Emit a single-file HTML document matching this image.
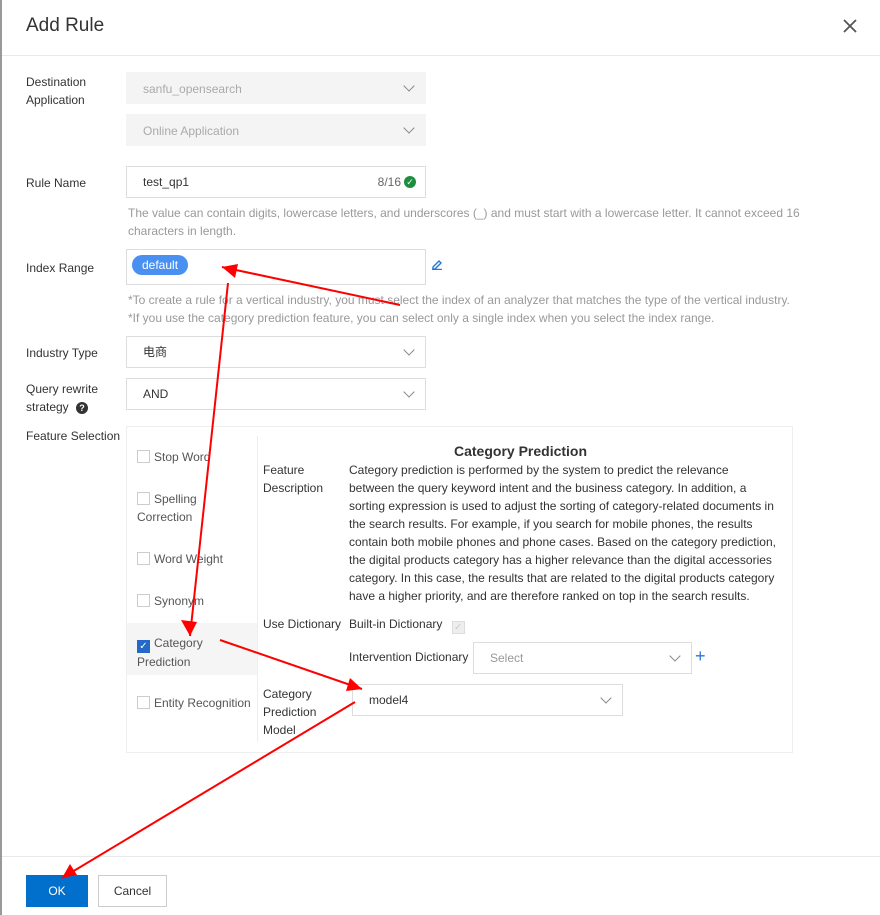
<!DOCTYPE html><html><head><style>
body{margin:0;width:880px;height:915px;background:#fff;font-family:"Liberation Sans",sans-serif;font-size:12px;color:#333;position:relative;overflow:hidden}
.a{position:absolute}
.lbl{position:absolute;left:26px;line-height:18px;color:#333}
.sel{position:absolute;left:126px;width:300px;height:30px;border:1px solid #ddd;box-sizing:border-box;line-height:28px;padding-left:16px}
.dis{background:#f4f4f4;border-color:#f4f4f4;color:#aaa}
.chev{position:absolute;right:12px;width:7px;height:7px;border-right:1.5px solid #888;border-bottom:1.5px solid #888;transform:rotate(45deg);top:9px}
.help{color:#999;line-height:18px}
.cb{display:inline-block;width:11px;height:11px;border:1px solid #ccc;vertical-align:-2px;margin-right:4px}
.fi{position:absolute;left:137px;line-height:18px;color:#555}
</style></head><body>
<div class="a" style="left:0;top:0;width:2px;height:915px;background:#999"></div>
<div class="a" style="left:26px;top:15px;font-size:19px;color:#333">Add Rule</div>
<svg class="a" style="left:843px;top:19px" width="14" height="14"><path d="M1 1L13 13M13 1L1 13" stroke="#555" stroke-width="1.8"/></svg>
<div class="a" style="left:2px;top:55px;width:878px;height:1px;background:#e8e8e8"></div>

<div class="lbl" style="top:73px">Destination<br>Application</div>
<div class="sel dis" style="top:72px;height:32px;line-height:32px">sanfu_opensearch<span class="chev"></span></div>
<div class="sel dis" style="top:114px;height:32px;line-height:32px">Online Application<span class="chev"></span></div>

<div class="lbl" style="top:174px">Rule Name</div>
<div class="sel" style="top:166px;height:32px;line-height:30px;color:#333">test_qp1<span class="a" style="right:24px;color:#666">8/16</span><span class="a" style="right:9px;top:9px;width:12px;height:12px;border-radius:50%;background:#1e8e3e;color:#fff;font-size:9px;line-height:12px;text-align:center">✓</span></div>
<div class="a help" style="left:128px;top:204px;width:680px">The value can contain digits, lowercase letters, and underscores (_) and must start with a lowercase letter. It cannot exceed 16 characters in length.</div>

<div class="lbl" style="top:259px">Index Range</div>
<div class="sel" style="top:249px;height:36px;padding-left:4px"><span class="a" style="left:5px;top:5px;height:20px;line-height:20px;padding:0 10px;background:#4a90f0;color:#fff;border-radius:10px">default</span></div>
<svg class="a" style="left:431px;top:258px" width="12" height="12"><path d="M2 9L8 3L10 5L4 11H2Z" fill="none" stroke="#2778d9" stroke-width="1.4"/><path d="M1 11.5H11" stroke="#2778d9" stroke-width="1.4"/></svg>
<div class="a help" style="left:128px;top:291px">*To create a rule for a vertical industry, you must select the index of an analyzer that matches the type of the vertical industry.<br>*If you use the category prediction feature, you can select only a single index when you select the index range.</div>

<div class="lbl" style="top:344px">Industry Type</div>
<div class="sel" style="top:336px;height:32px;line-height:30px">电商<span class="chev"></span></div>
<div class="lbl" style="top:380px">Query rewrite<br>strategy <span style="display:inline-block;width:12px;height:12px;border-radius:50%;background:#333;color:#fff;font-size:9px;line-height:12px;text-align:center;margin-left:4px;font-weight:bold">?</span></div>
<div class="sel" style="top:378px;height:32px;line-height:30px">AND<span class="chev"></span></div>

<div class="lbl" style="top:427px">Feature Selection</div>
<div class="a" style="left:126px;top:426px;width:667px;height:327px;border:1px solid #eee;box-sizing:border-box"></div>
<div class="a" style="left:257px;top:436px;width:1px;height:306px;background:#eee"></div>
<div class="a" style="left:127px;top:623px;width:130px;height:52px;background:#f5f5f5"></div>
<div class="fi" style="top:448px"><span class="cb"></span>Stop Word</div>
<div class="fi" style="top:490px"><span class="cb"></span>Spelling<br>Correction</div>
<div class="fi" style="top:550px"><span class="cb"></span>Word Weight</div>
<div class="fi" style="top:592px"><span class="cb"></span>Synonym</div>
<div class="fi" style="top:634px"><span class="cb" style="background:#2468c8;border-color:#2468c8;color:#fff;font-size:10px;line-height:11px;text-align:center">✓</span>Category<br>Prediction</div>
<div class="fi" style="top:694px"><span class="cb"></span>Entity Recognition</div>

<div class="a" style="left:454px;top:443px;font-size:14px;font-weight:bold;color:#333">Category Prediction</div>
<div class="a" style="left:263px;top:461px;line-height:18px">Feature<br>Description</div>
<div class="a" style="left:349px;top:461px;line-height:18px;white-space:nowrap">Category prediction is performed by the system to predict the relevance<br>between the query keyword intent and the business category. In addition, a<br>sorting expression is used to adjust the sorting of category-related documents in<br>the search results. For example, if you search for mobile phones, the results<br>contain both mobile phones and phone cases. Based on the category prediction,<br>the digital products category has a higher relevance than the digital accessories<br>category. In this case, the results that are related to the digital products category<br>have a higher priority, and are therefore ranked on top in the search results.</div>
<div class="a" style="left:263px;top:615px;line-height:18px">Use Dictionary</div>
<div class="a" style="left:349px;top:615px;line-height:18px">Built-in Dictionary <span class="cb" style="background:#eee;border-color:#ddd;margin-left:6px;color:#ccc;font-size:10px;line-height:11px;text-align:center">✓</span></div>
<div class="a" style="left:349px;top:648px;line-height:18px">Intervention Dictionary</div>
<div class="a" style="left:473px;top:642px;width:219px;height:32px;border:1px solid #ddd;box-sizing:border-box;line-height:30px;padding-left:16px;color:#999">Select<span class="chev"></span></div>
<div class="a" style="left:695px;top:646px;color:#2778d9;font-size:18px">+</div>
<div class="a" style="left:263px;top:685px;line-height:18px">Category<br>Prediction<br>Model</div>
<div class="a" style="left:352px;top:684px;width:271px;height:32px;border:1px solid #ddd;box-sizing:border-box;line-height:30px;padding-left:16px">model4<span class="chev"></span></div>

<div class="a" style="left:2px;top:856px;width:878px;height:1px;background:#e8e8e8"></div>
<div class="a" style="left:26px;top:875px;width:62px;height:32px;background:#0070cc;color:#fff;text-align:center;line-height:32px">OK</div>
<div class="a" style="left:98px;top:875px;width:69px;height:32px;border:1px solid #ccc;box-sizing:border-box;text-align:center;line-height:30px">Cancel</div>

<svg class="a" style="left:0;top:0" width="880" height="915">
<g stroke="#f00" stroke-width="2" fill="none">
<line x1="400" y1="305" x2="222" y2="267"/>
<line x1="228" y1="283" x2="190" y2="636"/>
<line x1="220" y1="640" x2="362" y2="689"/>
<line x1="355" y1="702" x2="62" y2="878"/>
</g>
<g fill="#f00">
<path d="M222 267L238 264L235 278z"/>
<path d="M190 636L181 620L197 622z"/>
<path d="M362 689L346 691L350 678z"/>
<path d="M62 878L70 864L77 875z"/>
</g></svg>
</body></html>
